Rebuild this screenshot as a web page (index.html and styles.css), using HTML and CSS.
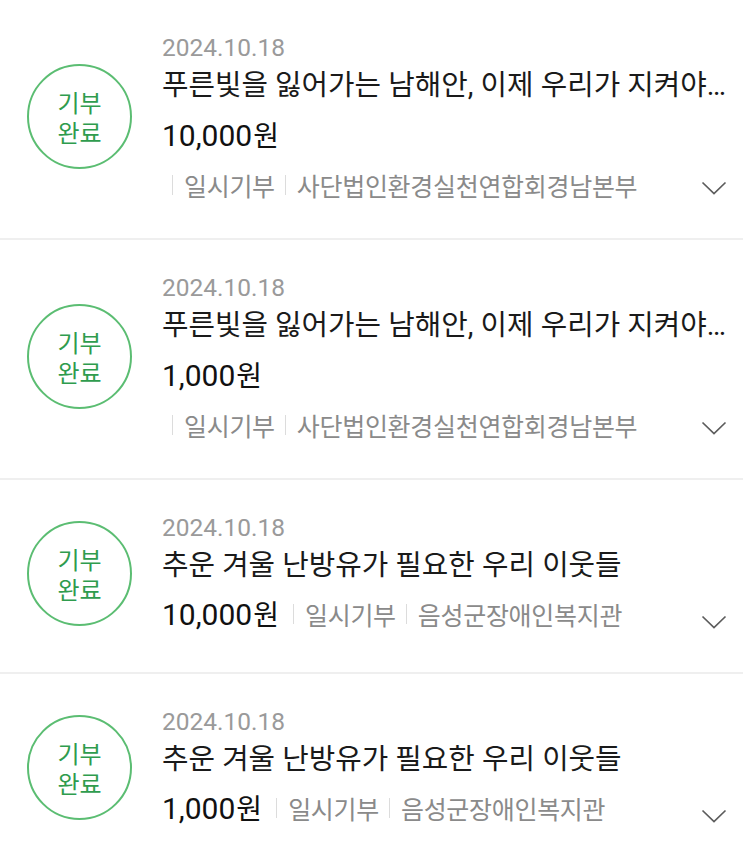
FILE: index.html
```html
<!DOCTYPE html>
<html lang="ko">
<head>
<meta charset="utf-8">
<link rel="stylesheet" href="styles.css">
</head>
<body>
<ul class="list">
  <li class="item">
    <div class="badge"><span>기부</span><span>완료</span></div>
    <div class="info">
      <div class="date">2024.10.18</div>
      <div class="title">푸른빛을 잃어가는 남해안, 이제 우리가 지켜야…</div>
      <div class="amount">10,000<span class="won">원</span></div>
      <div class="meta">
        <span class="sep"></span><span>일시기부</span><span class="sep"></span><span>사단법인환경실천연합회경남본부</span>
        <svg class="chev" viewBox="0 0 26 14" width="26" height="14"><polyline points="1.5,1.5 13,12.5 24.5,1.5"/></svg>
      </div>
    </div>
  </li>
  <li class="item">
    <div class="badge"><span>기부</span><span>완료</span></div>
    <div class="info">
      <div class="date">2024.10.18</div>
      <div class="title">푸른빛을 잃어가는 남해안, 이제 우리가 지켜야…</div>
      <div class="amount">1,000<span class="won">원</span></div>
      <div class="meta">
        <span class="sep"></span><span>일시기부</span><span class="sep"></span><span>사단법인환경실천연합회경남본부</span>
        <svg class="chev" viewBox="0 0 26 14" width="26" height="14"><polyline points="1.5,1.5 13,12.5 24.5,1.5"/></svg>
      </div>
    </div>
  </li>
  <li class="item">
    <div class="badge"><span>기부</span><span>완료</span></div>
    <div class="info">
      <div class="date">2024.10.18</div>
      <div class="title">추운 겨울 난방유가 필요한 우리 이웃들</div>
      <div class="amount-row">
        <span class="amount">10,000<span class="won">원</span></span>
        <span class="meta-inline"><span class="sep"></span><span>일시기부</span><span class="sep"></span><span>음성군장애인복지관</span></span>
        <svg class="chev" viewBox="0 0 26 14" width="26" height="14"><polyline points="1.5,1.5 13,12.5 24.5,1.5"/></svg>
      </div>
    </div>
  </li>
  <li class="item">
    <div class="badge"><span>기부</span><span>완료</span></div>
    <div class="info">
      <div class="date">2024.10.18</div>
      <div class="title">추운 겨울 난방유가 필요한 우리 이웃들</div>
      <div class="amount-row">
        <span class="amount">1,000<span class="won">원</span></span>
        <span class="meta-inline"><span class="sep"></span><span>일시기부</span><span class="sep"></span><span>음성군장애인복지관</span></span>
        <svg class="chev" viewBox="0 0 26 14" width="26" height="14"><polyline points="1.5,1.5 13,12.5 24.5,1.5"/></svg>
      </div>
    </div>
  </li>
</ul>
</body>
</html>
```

FILE: styles.css
```css
html, body {
  margin: 0;
  padding: 0;
  background: #ffffff;
}
body {
  font-family: "Roboto", "Noto Sans CJK KR", sans-serif;
  color: #141414;
}
.list {
  list-style: none;
  margin: 0;
  padding: 0;
}
.item {
  display: flex;
  align-items: center;
  padding: 33px 12px 38px 27px;
  border-bottom: 2px solid #efefef;
}
.badge {
  flex: none;
  width: 101px;
  height: 101px;
  border: 2px solid #5bbd72;
  border-radius: 50%;
  display: flex;
  flex-direction: column;
  align-items: center;
  justify-content: center;
  color: #2f9c4e;
  font-family: "Noto Sans CJK KR", sans-serif;
  font-size: 24px;
  line-height: 30px;
  margin-right: 30px;
}
.info {
  flex: 1;
  min-width: 0;
}
.date {
  font-size: 24.5px;
  line-height: 30px;
  color: #9a9a9a;
}
.title {
  margin-top: 4px;
  font-family: "Roboto", "Noto Sans CJK KR", sans-serif;
  font-size: 28.8px;
  line-height: 36px;
  color: #1a1a1a;
  white-space: nowrap;
  overflow: hidden;
  text-overflow: ellipsis;
}
.amount {
  display: block;
  margin-top: 11px;
  font-size: 30px;
  line-height: 40px;
  color: #111111;
  white-space: nowrap;
}
.won {
  font-family: "Noto Sans CJK KR", sans-serif;
  font-size: 28px;
  margin-left: 1px;
}
.meta {
  display: flex;
  align-items: center;
  margin-top: 14px;
  height: 30px;
  font-family: "Noto Sans CJK KR", sans-serif;
  font-size: 25px;
  letter-spacing: -0.3px;
  color: #8a8a8a;
  white-space: nowrap;
}
.amount-row {
  display: flex;
  align-items: center;
  margin-top: 11px;
  height: 40px;
}
.amount-row .amount {
  margin-top: 0;
}
.meta-inline {
  display: flex;
  align-items: center;
  font-family: "Noto Sans CJK KR", sans-serif;
  font-size: 25px;
  letter-spacing: -0.3px;
  color: #8a8a8a;
  white-space: nowrap;
  margin-left: 4px;
}
.sep {
  display: inline-block;
  width: 1px;
  height: 20px;
  background: #dcdcdc;
  margin: 0 11px 0 10px;
}
.chev {
  flex: none;
  margin-left: auto;
  margin-right: 4px;
  align-self: flex-end;
  margin-bottom: 5px;
  fill: none;
  stroke: #5c5c5c;
  stroke-width: 1.7;
}
```
